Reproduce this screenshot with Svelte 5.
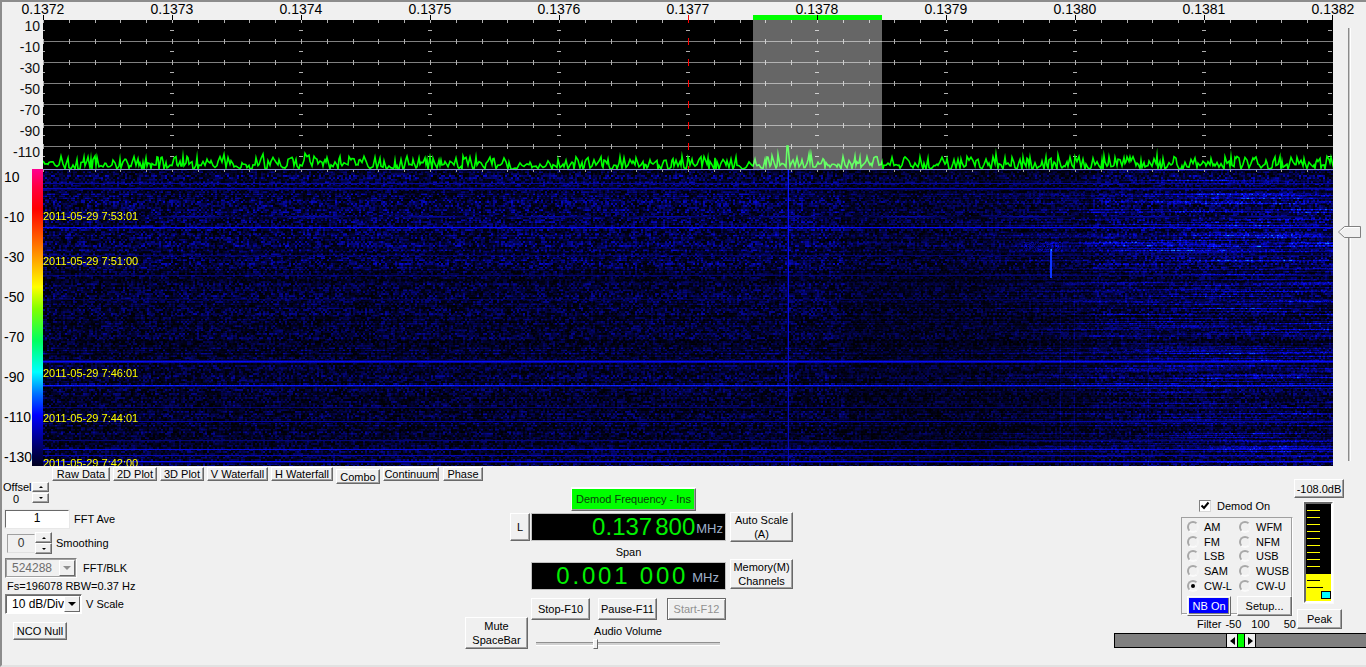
<script>
  import { onMount } from 'svelte';

  const freqs = ['0.1372', '0.1373', '0.1374', '0.1375', '0.1376', '0.1377', '0.1378', '0.1379', '0.1380', '0.1381', '0.1382'];
  const specDb = ['10', '-10', '-30', '-50', '-70', '-90', '-110'];
  const fallDb = ['10', '-10', '-30', '-50', '-70', '-90', '-110', '-130'];
  const stamps = [
    { t: '2011-05-29 7:53:01', y: 41 },
    { t: '2011-05-29 7:51:00', y: 86 },
    { t: '2011-05-29 7:46:01', y: 198 },
    { t: '2011-05-29 7:44:01', y: 243 },
    { t: '2011-05-29 7:42:00', y: 288 }
  ];
  const tabs = ['Raw Data', '2D Plot', '3D Plot', 'V Waterfall', 'H Waterfall', 'Combo', 'Continuum', 'Phase'];
  const modes = ['AM', 'WFM', 'FM', 'NFM', 'LSB', 'USB', 'SAM', 'WUSB', 'CW-L', 'CW-U'];
  const meterTicks = [0, 1, 2, 3, 4, 5, 6, 7, 8, 9, 10, 11];

  let specCanvas;
  let fallCanvas;

  const MAJOR = 129;
  const MINOR = 25.8;

  function mulberry(seed) {
    return () => {
      seed |= 0;
      seed = (seed + 0x6d2b79f5) | 0;
      let t = Math.imul(seed ^ (seed >>> 15), 1 | seed);
      t = (t + Math.imul(t ^ (t >>> 7), 61 | t)) ^ t;
      return ((t ^ (t >>> 14)) >>> 0) / 4294967296;
    };
  }

  function drawSpectrum() {
    const ctx = specCanvas.getContext('2d');
    const w = specCanvas.width;
    const h = specCanvas.height;
    const rnd = mulberry(1378);

    ctx.clearRect(0, 0, w, h);
    ctx.fillStyle = '#000';
    ctx.fillRect(0, 5, w, h - 5);

    // horizontal grid
    ctx.fillStyle = '#808080';
    for (let i = 0; i < 6; i++) ctx.fillRect(0, 26 + 21 * i, w, 1);

    // minor ticks on each grid line and the top edge
    ctx.fillStyle = '#b0b0b0';
    for (let x = 0; x < w; x += MINOR) {
      const px = Math.round(x);
      ctx.fillRect(px, 5, 1, 3);
      for (let i = 0; i < 6; i++) ctx.fillRect(px, 24 + 21 * i, 1, 5);
    }

    // decade markers
    for (let m = 0; m <= 10; m++) {
      const px = m * MAJOR;
      const red = m === 5;
      ctx.fillStyle = '#000';
      ctx.fillRect(Math.min(px, w - 1), 0, 1, 5);
      ctx.fillStyle = '#b0b0b0';
      for (let i = 0; i < 7; i++) ctx.fillRect(Math.min(px, w - 3) - 2, 15 + 21 * i, 4, 1);
      if (red) {
        ctx.fillStyle = '#ff0000';
        ctx.fillRect(px, 0, 1, 8);
        for (let i = 0; i < 6; i++) ctx.fillRect(px, 23 + 21 * i, 1, 7);
        ctx.fillRect(px, 151, 1, 3);
      }
    }

    // noise trace, uneven steps so it doesn't look like a regular comb
    ctx.strokeStyle = '#00ff00';
    ctx.lineWidth = 1.6;
    ctx.beginPath();
    let x = 0;
    ctx.moveTo(0, 146);
    while (x <= w) {
      x += 1 + Math.floor(rnd() * 2);
      let y = rnd() < 0.45 ? 149 + rnd() * 6 : 141 + rnd() * 10;
      if (rnd() < 0.04) y -= 3;
      const abs = x + 43;
      if (abs > 300 && abs < 330) y -= 3;
      if (abs > 770 && abs < 835) y -= 2;
      if (abs >= 787 && abs <= 789) y = 131;
      ctx.lineTo(x, Math.min(y, 154));
    }
    ctx.stroke();

    // demod passband
    ctx.fillStyle = 'rgba(255,255,255,0.4)';
    ctx.fillRect(710, 5, 129, h - 5);
    ctx.fillStyle = '#00ff00';
    ctx.fillRect(710, 0, 129, 5);
    ctx.fillStyle = '#000';
    ctx.fillRect(774, 0, 1, 5);
  }

  function drawWaterfall() {
    const ctx = fallCanvas.getContext('2d');
    const w = fallCanvas.width;
    const h = fallCanvas.height;
    const img = ctx.createImageData(w, h);
    const rnd = mulberry(5290);

    // full-width lines, keyed by row inside the canvas
    const bright = {
      14: 0.55, 19: 0.65, 20: 0.35, 47: 0.6, 48: 0.4, 58: 0.9, 59: 0.3, 86: 0.4, 106: 0.4, 130: 0.3,
      191: 0.4, 192: 0.9, 193: 0.6, 216: 1, 217: 0.45, 238: 0.4, 252: 0.6, 271: 0.45,
      280: 0.8, 286: 0.65, 292: 0.9, 293: 0.4
    };

    const rowGain = [];
    const stripe = [];
    const phase = [];
    for (let y = 0; y < h; y++) {
      rowGain.push(0.55 + rnd() * 0.9);
      stripe.push(rnd() < 0.45 ? 0.3 + rnd() * 0.7 : rnd() * 0.12);
      phase.push(rnd() * 6.28);
    }

    // noise comes in small blocks, not single pixels
    const cw = (w >> 1) + 1;
    const ch = (h >> 1) + 1;
    const cells = new Float32Array(cw * ch);
    for (let i = 0; i < cells.length; i++) cells[i] = Math.pow(rnd(), 1.6);

    for (let y = 0; y < h; y++) {
      const ampY = y < 100 ? 0.52 : 0.4;
      for (let x = 0; x < w; x++) {
        const n = cells[(y >> 1) * cw + (x >> 1)];
        // right side carries more banding, the centre right is darker
        const rightBand = x > 950 ? 0.25 + Math.min(1, (x - 950) / 200) * 0.6 : 0.06 + (x / 950) * 0.12;
        const dark = x > 800 && x < 1050 ? 0.72 : 1;
        const wobble = 0.6 + 0.4 * Math.sin(x / 37 + phase[y]);
        let v = n * ampY * rowGain[y] * dark + stripe[y] * rightBand * wobble * (0.5 + rnd() * 0.5);

        const line = bright[y];
        if (line) {
          const edge = y === 47 || y === 48 ? 0.6 + 0.4 * Math.sin(x / 19) : 1;
          v = Math.max(v, line * edge * (0.88 + rnd() * 0.12));
        }

        // carrier at 0.13780 and faint vertical spurs
        if (x === 745) v = Math.max(v, 0.95 - (y / h) * 0.35);
        if (x === 744) v = Math.max(v, 0.4 - (y / h) * 0.2);
        if ((x === 1017 || x === 1031 || x === 1105) && y > 120) v += 0.15;
        if (x >= 1007 && x <= 1008 && y >= 80 && y <= 108) v = 1;
        if (y > 72 && y < 82 && Math.abs(x - 1000) < 20 && rnd() < 0.5) v += 0.25;

        const i = (y * w + x) * 4;
        const over = Math.max(0, v - 0.9);
        img.data[i] = Math.min(255, (v * 0.03 + over * 0.2) * 255);
        img.data[i + 1] = Math.min(255, (v * 0.05 + over * 1.6) * 255);
        img.data[i + 2] = Math.min(255, v * 1.15 * 255);
        img.data[i + 3] = 255;
      }
    }
    ctx.putImageData(img, 0, 0);

    // top border line of the waterfall
    ctx.fillStyle = '#8f8fd0';
    ctx.fillRect(0, 0, w, 1);
    ctx.fillStyle = '#a0a0a0';
    for (let x = 0; x < w; x += MINOR) ctx.fillRect(Math.round(x), 1, 1, 2);
  }

  onMount(() => {
    drawSpectrum();
    drawWaterfall();
  });
</script>

<div class="form">
  <div class="scope">
    <div class="plots">
      <div class="freq-axis">
        {#each freqs as f}
          <span>{f}</span>
        {/each}
      </div>

      <div class="plot-row">
        <div class="db-axis">
          {#each specDb as d}
            <span>{d}</span>
          {/each}
        </div>
        <canvas bind:this={specCanvas} width="1290" height="154"></canvas>
      </div>

      <div class="plot-row">
        <div class="fall-axis">
          {#each fallDb as d}
            <span>{d}</span>
          {/each}
        </div>
        <div class="color-bar"></div>
        <div class="fall-wrap">
          <canvas bind:this={fallCanvas} width="1290" height="297"></canvas>
          {#each stamps as s}
            <span class="stamp" style="top: {s.y}px">{s.t}</span>
          {/each}
        </div>
      </div>
    </div>

    <div class="ref-slider">
      <div class="ref-track"></div>
      <svg class="ref-thumb" width="23" height="12" viewBox="0 0 23 12">
        <path d="M0.5 6 L6.5 0.5 H22.5 V11.5 H6.5 Z" fill="#f0f0f0" stroke="#808080" />
        <path d="M1.5 6 L7 1.5 H21.5" fill="none" stroke="#fff" />
      </svg>
    </div>
  </div>

  <div class="controls">
    <div class="left">
      <div class="tabs">
        {#each tabs as tab}
          <button class="btn tab" class:active={tab === 'Combo'}>{tab}</button>
        {/each}
      </div>

      <div class="offset-row">
        <div class="offset-text">
          <span>Offsel</span>
          <span class="offset-val">0</span>
        </div>
        <div class="spin small">
          <button class="btn spin-btn"><i class="up"></i></button>
          <button class="btn spin-btn"><i class="down"></i></button>
        </div>
      </div>

      <div class="field-row ave">
        <div class="input">1</div>
        <span class="lbl-ave">FFT Ave</span>
      </div>

      <div class="field-row smooth">
        <div class="smooth-box">0</div>
        <div class="spin">
          <button class="btn spin-btn"><i class="up"></i></button>
          <button class="btn spin-btn"><i class="down"></i></button>
        </div>
        <span class="lbl-smooth">Smoothing</span>
      </div>

      <div class="field-row blk">
        <div class="combo disabled">
          <span>524288</span>
          <b><i class="down big"></i></b>
        </div>
        <span class="lbl-blk">FFT/BLK</span>
      </div>

      <div class="fs">Fs=196078 RBW=0.37 Hz</div>

      <div class="field-row vscale">
        <div class="combo">
          <span>10 dB/Div</span>
          <b><i class="down big"></i></b>
        </div>
        <span class="lbl-scale">V Scale</span>
      </div>

      <button class="btn nco">NCO Null</button>
    </div>

    <div class="center">
      <button class="btn demod-freq">Demod Frequency - Ins</button>

      <div class="readout-row first">
        <button class="btn lock">L</button>
        <div class="readout">
          <span class="digits tight">0.137 800</span>
          <span class="unit">MHz</span>
        </div>
        <button class="btn side">Auto Scale<br />(A)</button>
      </div>

      <div class="span-label">Span</div>

      <div class="readout-row">
        <div class="readout span-readout">
          <span class="digits wide">0.001 000</span>
          <span class="unit">MHz</span>
        </div>
        <button class="btn side memory">Memory(M)<br />Channels</button>
      </div>

      <div class="run-row">
        <button class="btn run">Stop-F10</button>
        <button class="btn run">Pause-F11</button>
        <button class="btn run start">Start-F12</button>
      </div>

      <div class="audio-row">
        <button class="btn mute">Mute<br />SpaceBar</button>
        <div class="volume">
          <span>Audio Volume</span>
          <div class="vol-track"><div class="vol-thumb"></div></div>
        </div>
      </div>
    </div>

    <div class="right">
      <div class="right-top">
        <div class="demod-col">
          <div class="demod-on">
            <span class="check">
              <svg width="10" height="10" viewBox="0 0 10 10"><path d="M1.5 4.5 L4 7 L8.5 1.5" fill="none" stroke="#000" stroke-width="2" /></svg>
            </span>
            <span>Demod On</span>
          </div>

          <div class="modes">
            <div class="mode-grid">
              {#each modes as m}
                <div class="mode">
                  <span class="radio" class:on={m === 'CW-L'}></span>
                  <span>{m}</span>
                </div>
              {/each}
            </div>
            <div class="mode-btns">
              <button class="btn nb">NB On</button>
              <button class="btn setup">Setup...</button>
            </div>
          </div>

          <div class="filter-labels">
            <span class="f-name">Filter</span>
            <span class="f-low">-50</span>
            <span class="f-mid">100</span>
            <span class="f-high">50</span>
          </div>
        </div>

        <div class="meter-col">
          <button class="btn level">-108.0dB</button>
          <div class="meter">
            {#each meterTicks as t}
              <div class="m-tick" class:low={t > 8}></div>
            {/each}
            <div class="m-thumb"></div>
          </div>
          <button class="btn peak">Peak</button>
        </div>
      </div>

      <div class="filter-bar">
        <div class="filter-ctl">
          <span class="f-arrow"><i class="left-tri"></i></span>
          <span class="f-green"></span>
          <span class="f-arrow"><i class="right-tri"></i></span>
        </div>
      </div>
    </div>
  </div>
</div>

<style>
  :global(body) {
    margin: 0;
    background: #f0f0f0;
  }

  .form {
    width: 1366px;
    height: 667px;
    box-sizing: border-box;
    border-top: 2px solid #8c8c8c;
    border-left: 2px solid #8c8c8c;
    border-bottom: 2px solid #e2e2e2;
    background: #f0f0f0;
    font-family: "Liberation Sans", Arial, sans-serif;
    font-size: 11px;
    color: #000;
    overflow: hidden;
  }

  .scope {
    display: flex;
    height: 465px;
  }

  .plots {
    width: 1331px;
  }

  .freq-axis {
    display: flex;
    height: 13px;
    margin-left: -23.5px;
    font-size: 14px;
    line-height: 14px;
  }

  .freq-axis span {
    flex: 0 0 129px;
    text-align: center;
  }

  .plot-row {
    display: flex;
  }

  canvas {
    display: block;
  }

  .db-axis {
    width: 41px;
    box-sizing: border-box;
    padding: 1px 3px 0 0;
    display: flex;
    flex-direction: column;
    align-items: flex-end;
    font-size: 14px;
    line-height: 21px;
    color: #111;
  }

  .fall-axis {
    width: 30px;
    height: 297px;
    padding: 0 0 0 2px;
    box-sizing: border-box;
    display: flex;
    flex-direction: column;
    font-size: 14px;
    line-height: 16px;
  }

  .fall-axis span {
    flex: 0 0 40px;
  }

  .color-bar {
    width: 11px;
    height: 297px;
    background: linear-gradient(
      #ff0090 0,
      #ff0040 18px,
      #ff0000 40px,
      #ff7000 75px,
      #ffff00 118px,
      #80ff00 140px,
      #00ff60 172px,
      #00ffff 203px,
      #0070ff 225px,
      #0000ff 246px,
      #000060 280px,
      #000020 297px
    );
  }

  .fall-wrap {
    position: relative;
    width: 1290px;
    height: 297px;
    overflow: hidden;
  }

  .stamp {
    position: absolute;
    left: 0;
    color: #ffff00;
    font-size: 11px;
    line-height: 13px;
    white-space: nowrap;
  }

  .ref-slider {
    position: relative;
    width: 33px;
  }

  .ref-track {
    width: 3px;
    height: 433px;
    margin: 26px 0 0 15px;
    background: #c8c8c8;
    border-left: 1px solid #8a8a8a;
    border-right: 1px solid #fff;
    box-sizing: border-box;
  }

  .ref-thumb {
    position: absolute;
    left: 5px;
    top: 224px;
  }

  .controls {
    display: flex;
    height: 198px;
  }

  .btn {
    display: block;
    box-sizing: border-box;
    margin: 0;
    padding: 0;
    background: #f0f0f0;
    border: 1px solid;
    border-color: #fff #696969 #696969 #fff;
    box-shadow: inset -1px -1px 0 #a0a0a0;
    font: inherit;
    color: #000;
    text-align: center;
    line-height: 14px;
  }

  .left {
    width: 463px;
    flex: none;
  }

  .tabs {
    display: flex;
    height: 14px;
    padding-left: 50px;
    gap: 3px;
  }

  .tab {
    height: 14px;
    flex: none;
    line-height: 11px;
    white-space: nowrap;
  }

  .tab:nth-child(1) { width: 58px; }
  .tab:nth-child(2),
  .tab:nth-child(3) { width: 44px; }
  .tab:nth-child(4) { width: 61px; }
  .tab:nth-child(5) { width: 62px; }
  .tab:nth-child(6) { width: 44px; }
  .tab:nth-child(7) { width: 56px; }
  .tab:nth-child(8) { width: 40px; margin-left: 1px; }

  .tab.active {
    height: 15px;
    margin-top: 2px;
    line-height: 12px;
  }

  .offset-row {
    display: flex;
    padding: 1px 0 0 1px;
    height: 25px;
  }

  .offset-text {
    width: 29px;
    display: flex;
    flex-direction: column;
    line-height: 11px;
  }

  .offset-val {
    padding-left: 10px;
    line-height: 12px;
  }

  .spin {
    display: flex;
    flex-direction: column;
  }

  .spin.small {
    gap: 1px;
  }

  .spin-btn {
    width: 17px;
    height: 10px;
    display: flex;
    align-items: center;
    justify-content: center;
  }

  i.up,
  i.down {
    display: block;
    width: 0;
    height: 0;
    border-left: 2px solid transparent;
    border-right: 2px solid transparent;
  }

  i.up { border-bottom: 2px solid #000; }
  i.down { border-top: 2px solid #000; }

  i.down.big {
    border-left-width: 4px;
    border-right-width: 4px;
    border-top-width: 4px;
  }

  .field-row {
    display: flex;
    align-items: center;
  }

  .ave {
    margin: 3px 0 0 3px;
    height: 18px;
  }

  .input {
    width: 64px;
    height: 18px;
    box-sizing: border-box;
    background: #fff;
    border: 1px solid;
    border-color: #696969 #fff #fff #696969;
    outline: 1px solid #e8e8e8;
    text-align: center;
    line-height: 15px;
    font-size: 12px;
  }

  .lbl-ave {
    margin-left: 5px;
  }

  .smooth {
    margin: 4px 0 0 5px;
    height: 22px;
  }

  .smooth-box {
    width: 28px;
    height: 19px;
    box-sizing: border-box;
    border: 1px solid;
    border-color: #a0a0a0 #f0f0f0 #e0e0e0 #a0a0a0;
    text-align: center;
    line-height: 17px;
    color: #333;
    font-size: 12px;
  }

  .smooth .spin-btn {
    height: 11px;
  }

  .lbl-smooth {
    margin-left: 4px;
  }

  .blk {
    margin: 4px 0 0 3px;
    height: 20px;
  }

  .combo {
    width: 72px;
    height: 20px;
    box-sizing: border-box;
    display: flex;
    align-items: center;
    justify-content: space-between;
    background: #fff;
    border: 1px solid;
    border-color: #808080 #fff #fff #808080;
    padding-left: 6px;
    font-size: 12px;
    white-space: nowrap;
    box-shadow: inset 1px 1px 0 #696969;
  }

  .combo b {
    display: flex;
    flex: none;
    align-items: center;
    justify-content: center;
    width: 16px;
    height: 16px;
    margin-right: 1px;
    background: #f0f0f0;
    border: 1px solid;
    border-color: #fff #696969 #696969 #fff;
    box-sizing: border-box;
  }

  .combo.disabled {
    background: #f0f0f0;
    color: #6d6d6d;
    box-shadow: inset 0 0 0 1px #a0a0a0;
  }

  .combo.disabled b i {
    border-top-color: #909090;
  }

  .lbl-blk {
    margin-left: 6px;
  }

  .fs {
    margin: 1px 0 0 5px;
    height: 14px;
    line-height: 14px;
  }

  .vscale {
    margin: 1px 0 0 3px;
    height: 20px;
  }

  .vscale .combo {
    width: 77px;
  }

  .lbl-scale {
    margin-left: 4px;
  }

  .nco {
    width: 54px;
    height: 18px;
    margin: 8px 0 0 11px;
  }

  .center {
    width: 328px;
    flex: none;
    padding-top: 21px;
    box-sizing: border-box;
  }

  .demod-freq {
    width: 125px;
    height: 23px;
    margin-left: 106px;
    padding-bottom: 2px;
    background: #00ff00;
    box-shadow: inset -1px -1px 0 #a0a0a0, 0 -1px 0 #fff;
    color: #0c400c;
  }

  .readout-row {
    display: flex;
    align-items: flex-start;
    margin-left: 66px;
  }

  .readout-row.first {
    margin-left: 45px;
    margin-top: 1px;
  }

  .lock {
    width: 20px;
    height: 28px;
    margin: 1px 1px 0 0;
  }

  .readout {
    width: 195px;
    height: 28px;
    margin-top: 1px;
    box-sizing: border-box;
    display: flex;
    align-items: center;
    justify-content: flex-end;
    background: #000;
    border: 1px solid;
    border-color: #696969 #fff #fff #696969;
    outline: 1px solid #c0c0c0;
    outline-offset: -1px;
    overflow: hidden;
  }

  .digits {
    color: #00f000;
    font-size: 24px;
    line-height: 26px;
    white-space: pre;
  }

  .digits.tight {
    word-spacing: -3.6px;
  }

  .digits.wide {
    letter-spacing: 2.8px;
    margin-right: 1px;
  }

  .unit {
    color: #9fb0c8;
    font-size: 13px;
    padding: 3px 2px 0 1px;
  }

  .span-readout .unit {
    padding-left: 3px;
    padding-right: 6px;
  }

  .side {
    width: 63px;
    height: 30px;
    margin-left: 4px;
  }

  .memory {
    margin-top: -2px;
  }

  .span-label {
    height: 19px;
    line-height: 20px;
    margin-left: 66px;
    width: 195px;
    text-align: center;
  }

  .run-row {
    display: flex;
    margin: 8px 0 0 66px;
  }

  .run {
    width: 59px;
    height: 22px;
    margin-right: 8px;
  }

  .run:nth-child(2) {
    margin-right: 10px;
  }

  .run.start {
    color: #909090;
    border-color: #696969;
    box-shadow: inset 1px 1px 0 #fff, inset -1px -1px 0 #a0a0a0;
    margin-right: 0;
  }

  .audio-row {
    display: flex;
    margin-top: -3px;
  }

  .mute {
    width: 63px;
    height: 32px;
  }

  .volume {
    width: 184px;
    margin-left: 8px;
    text-align: center;
    padding-top: 7px;
    line-height: 14px;
  }

  .vol-track {
    position: relative;
    height: 2px;
    margin-top: 4px;
    background: #d0d0d0;
    border-top: 1px solid #909090;
    border-bottom: 1px solid #fff;
  }

  .vol-thumb {
    position: absolute;
    left: 57px;
    top: -4px;
    width: 5px;
    height: 10px;
    box-sizing: border-box;
    background: #f0f0f0;
    border: 1px solid;
    border-color: #fff #696969 #696969 #fff;
  }

  .right {
    width: 252px;
    flex: none;
    margin-left: auto;
  }

  .right-top {
    display: flex;
    height: 166px;
    padding-left: 67px;
  }

  .demod-col {
    width: 113px;
    flex: none;
  }

  .demod-on {
    display: flex;
    align-items: center;
    margin: 32px 0 0 18px;
    height: 13px;
  }

  .check {
    display: flex;
    align-items: center;
    justify-content: center;
    width: 12px;
    height: 12px;
    margin-right: 6px;
    box-sizing: border-box;
    background: #fff;
    border: 1px solid;
    border-color: #808080 #d8d8d8 #d8d8d8 #808080;
  }

  .modes {
    width: 112px;
    height: 98px;
    margin-top: 5px;
    box-sizing: border-box;
    border: 1px solid #a0a0a0;
    border-right-color: #fff;
    border-bottom-color: #fff;
    box-shadow: inset -1px -1px 0 #a0a0a0;
    padding: 2px 0 0 5px;
  }

  .mode-grid {
    display: grid;
    grid-template-columns: 52px 52px;
    grid-auto-rows: 14.6px;
  }

  .mode {
    display: flex;
    align-items: center;
    white-space: nowrap;
  }

  .radio {
    width: 12px;
    height: 12px;
    margin-right: 5px;
    box-sizing: border-box;
    flex: none;
    border-radius: 50%;
    border: 2px solid;
    border-color: #a8a8a8 #f4f4f4 #fafafa #a8a8a8;
    background: #f0f0f0;
    position: relative;
  }

  .radio.on::after {
    content: '';
    position: absolute;
    left: 2px;
    top: 2px;
    width: 4px;
    height: 4px;
    border-radius: 50%;
    background: #000;
  }

  .mode-btns {
    display: flex;
    margin-top: 3px;
  }

  .nb {
    width: 45px;
    height: 20px;
    background: #0000ff;
    color: #fff;
    box-shadow: inset 0 0 0 1px #f0f0f0, inset -2px -2px 0 #808080;
  }

  .setup {
    width: 56px;
    height: 20px;
    margin-left: 6px;
  }

  .filter-labels {
    display: flex;
    height: 14px;
    margin-top: 2px;
    line-height: 14px;
    padding-left: 16px;
  }

  .f-low { margin-left: 4px; }
  .f-mid { margin-left: 10px; }
  .f-high { margin-left: 14px; }

  .meter-col {
    width: 50px;
    flex: none;
  }

  .level {
    width: 50px;
    height: 19px;
    margin-top: 12px;
  }

  .meter {
    position: relative;
    width: 29px;
    height: 101px;
    margin: 4px 0 0 10px;
    box-sizing: border-box;
    padding: 6px 0 0 1px;
    border: 2px solid;
    border-color: #696969 #fff #fff #696969;
    outline: 1px solid #fafafa;
    background: linear-gradient(#000 70px, #ffff00 70px);
  }

  .m-tick {
    width: 13px;
    height: 1px;
    margin-bottom: 6px;
    background: #ffff00;
  }

  .m-tick.low {
    background: #000;
  }

  .m-tick:nth-last-child(2) {
    width: 16px;
  }

  .m-thumb {
    position: absolute;
    left: 15px;
    top: 87px;
    width: 10px;
    height: 8px;
    box-sizing: border-box;
    background: #00ffff;
    border: 1px solid #000;
  }

  .peak {
    width: 45px;
    height: 20px;
    margin: 6px 0 0 3px;
  }

  .filter-bar {
    height: 15px;
    box-sizing: border-box;
    background: #808080;
    border: 1px solid #000;
    border-right: 0;
    display: flex;
    padding-left: 111px;
  }

  .filter-ctl {
    display: flex;
  }

  .f-arrow {
    width: 10px;
    height: 13px;
    background: #f0f0f0;
    border-left: 1px solid #000;
    border-right: 1px solid #000;
    display: flex;
    align-items: center;
    justify-content: center;
  }

  .f-green {
    width: 6px;
    background: #00ff00;
  }

  .left-tri,
  .right-tri {
    display: block;
    width: 0;
    height: 0;
    border-top: 4px solid transparent;
    border-bottom: 4px solid transparent;
  }

  .left-tri { border-right: 5px solid #000; }
  .right-tri { border-left: 5px solid #000; }
</style>
